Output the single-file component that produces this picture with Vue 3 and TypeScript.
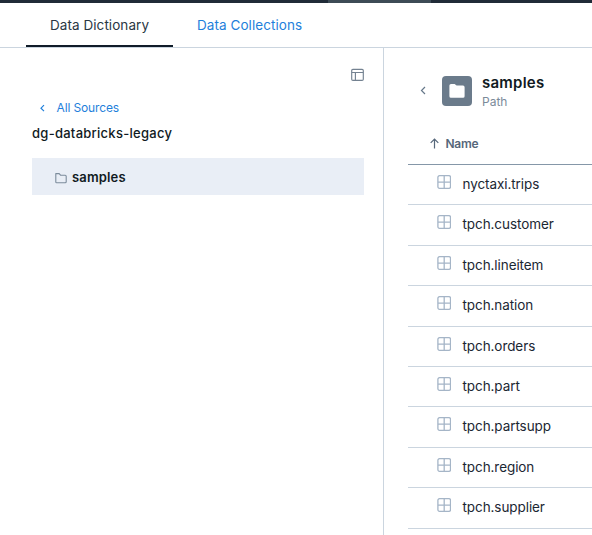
<script setup lang="ts">
interface TableEntry {
  name: string
}

const tables: TableEntry[] = [
  { name: 'nyctaxi.trips' },
  { name: 'tpch.customer' },
  { name: 'tpch.lineitem' },
  { name: 'tpch.nation' },
  { name: 'tpch.orders' },
  { name: 'tpch.part' },
  { name: 'tpch.partsupp' },
  { name: 'tpch.region' },
  { name: 'tpch.supplier' },
]
</script>

<template>
  <div class="page">
    <div class="topbar"><div class="topbar-active"></div></div>
    <nav class="tabs">
      <a class="tab active">Data Dictionary</a>
      <a class="tab">Data Collections</a>
    </nav>
    <main class="content">
      <aside class="sidebar">
        <div class="tools">
          <svg width="13" height="14" viewBox="0 0 13 14" fill="none" stroke="#748291" stroke-width="1.15">
            <rect x=".7" y="1.4" width="11.6" height="11" rx="1.2" />
            <path d="M.7 4.5H12.3M4.4 4.5V12.4" />
          </svg>
        </div>
        <a class="back">
          <svg class="back-icon" width="6" height="8" viewBox="0 0 6 8" fill="none" stroke="#1f7fdb" stroke-width="1.2"><path d="M5 1.2L2 4.2L5 7.2" /></svg>
          <span>All Sources</span>
        </a>
        <div class="source">dg-databricks-legacy</div>
        <div class="node">
          <svg class="node-icon" width="12" height="12" viewBox="0 0 12 12" fill="none" stroke="#7c8c9c" stroke-width="1.1" stroke-linejoin="round">
            <path d="M.8 1.6H4.2L5.5 3.2H10.2Q11.2 3.2 11.2 4.2V9.7Q11.2 10.7 10.2 10.7H1.6Q.8 10.7 .8 9.9Z" />
          </svg>
          <span class="node-label">samples</span>
        </div>
      </aside>
      <section class="detail">
        <header class="heading">
          <svg class="heading-back" width="6" height="9" viewBox="0 0 6 9" fill="none" stroke="#66788a" stroke-width="1.2"><path d="M5 1L1.5 4.5L5 8" /></svg>
          <div class="badge">
            <svg width="16" height="14" viewBox="0 0 16 14" fill="#fff"><path d="M2 0H5.6L7.6 1.6H14Q15.6 1.6 15.6 3.2V12.2Q15.6 13.8 14 13.8H2Q.4 13.8 .4 12.2V1.6Q.4 0 2 0Z" /></svg>
          </div>
          <div class="titles">
            <div class="title">samples</div>
            <div class="subtitle">Path</div>
          </div>
        </header>
        <div class="column">
          <svg width="9" height="11" viewBox="0 0 9 11" fill="none" stroke="#56677a" stroke-width="1.2"><path d="M4.5 10.6V1M.7 4.8L4.5 1L8.3 4.8" /></svg>
          <span>Name</span>
        </div>
        <div v-for="table in tables" :key="table.name" class="row">
          <svg width="14" height="14" viewBox="0 0 14 14" fill="none" stroke="#a5b5c7" stroke-width="1.3">
            <rect x=".9" y=".7" width="12.6" height="12.6" rx="1.6" />
            <path d="M7.2 .7V13.3M.9 7.2H13.5" />
          </svg>
          <span class="row-label">{{ table.name }}</span>
        </div>
      </section>
    </main>
  </div>
</template>

<style>
body {
  background: #fff;
  overflow: hidden;
}
</style>

<style scoped>
.page {
  width: 592px;
  height: 535px;
  overflow: hidden;
  display: flex;
  flex-direction: column;
  background: #fff;
  color: #1b2733;
  font-family: Inter, 'Liberation Sans', sans-serif;
  white-space: nowrap;
}
.page * {
  box-sizing: border-box;
}
svg {
  display: block;
  flex: none;
}
.topbar {
  flex: none;
  height: 3px;
  padding-left: 328px;
  background: #202b38;
}
.topbar-active {
  width: 103px;
  height: 3px;
  background: #3d4b56;
}
.tabs {
  flex: none;
  display: flex;
  height: 45px;
  padding-left: 26px;
  border-bottom: 1px solid #cbd5df;
}
.tab {
  height: 44px;
  padding: 12px 24px 0;
  font-size: 13.5px;
  line-height: 20px;
  letter-spacing: 0.06px;
  color: #1f7fdb;
}
.tab.active {
  width: 147px;
  color: #2a3744;
  border-bottom: 2px solid #101c29;
}
.content {
  flex: 1;
  display: flex;
  min-height: 0;
}
.sidebar {
  flex: none;
  width: 384px;
  padding: 20px 19px 0 32px;
  border-right: 1px solid #cbd5df;
}
.tools {
  display: flex;
  justify-content: flex-end;
  height: 29px;
}
.back {
  display: flex;
  align-items: center;
  gap: 11.5px;
  height: 20px;
  padding-left: 7px;
  color: #1f7fdb;
  font-size: 12px;
  letter-spacing: -0.13px;
}
.back-icon {
  margin-top: 2px;
}
.source {
  padding-top: 7px;
  font-size: 13px;
  line-height: 18px;
  font-weight: 500;
  letter-spacing: 0.27px;
  color: #101a22;
}
.node {
  display: flex;
  align-items: flex-start;
  gap: 5px;
  height: 37px;
  margin-top: 16px;
  padding: 10px 0 0 23px;
  background: #e9eef6;
  color: #101a22;
  font-size: 13px;
  font-weight: 600;
  letter-spacing: 0.15px;
}
.node-icon {
  margin-top: 4px;
}
.node-label {
  line-height: 18px;
}
.detail {
  flex: 1;
  min-width: 0;
  padding: 27px 0 0 24px;
}
.heading {
  display: flex;
  height: 48px;
  padding-left: 12px;
}
.heading-back {
  margin-top: 11px;
}
.badge {
  display: grid;
  place-items: center;
  width: 30px;
  height: 30px;
  margin: 1px 10px 0 16px;
  border-radius: 4px;
  background: #6b7b8b;
}
.title {
  height: 18px;
  font-size: 15px;
  line-height: 16px;
  font-weight: 600;
  letter-spacing: 0.23px;
  color: #101a22;
}
.subtitle {
  font-size: 12px;
  line-height: 18px;
  color: #7b8b9a;
}
.column {
  display: flex;
  align-items: center;
  gap: 6.4px;
  height: 42px;
  padding: 0 0 1px 22px;
  border-bottom: 1px solid #8597a8;
  font-size: 12px;
  font-weight: 600;
  letter-spacing: -0.2px;
  color: #56677a;
}
.row {
  display: flex;
  align-items: flex-start;
  gap: 11.5px;
  height: 40.42px;
  padding: 10px 0 0 29px;
  border-bottom: 1px solid #cbd5df;
  font-size: 13.5px;
  letter-spacing: -0.08px;
}
.row-label {
  line-height: 18px;
}
</style>
